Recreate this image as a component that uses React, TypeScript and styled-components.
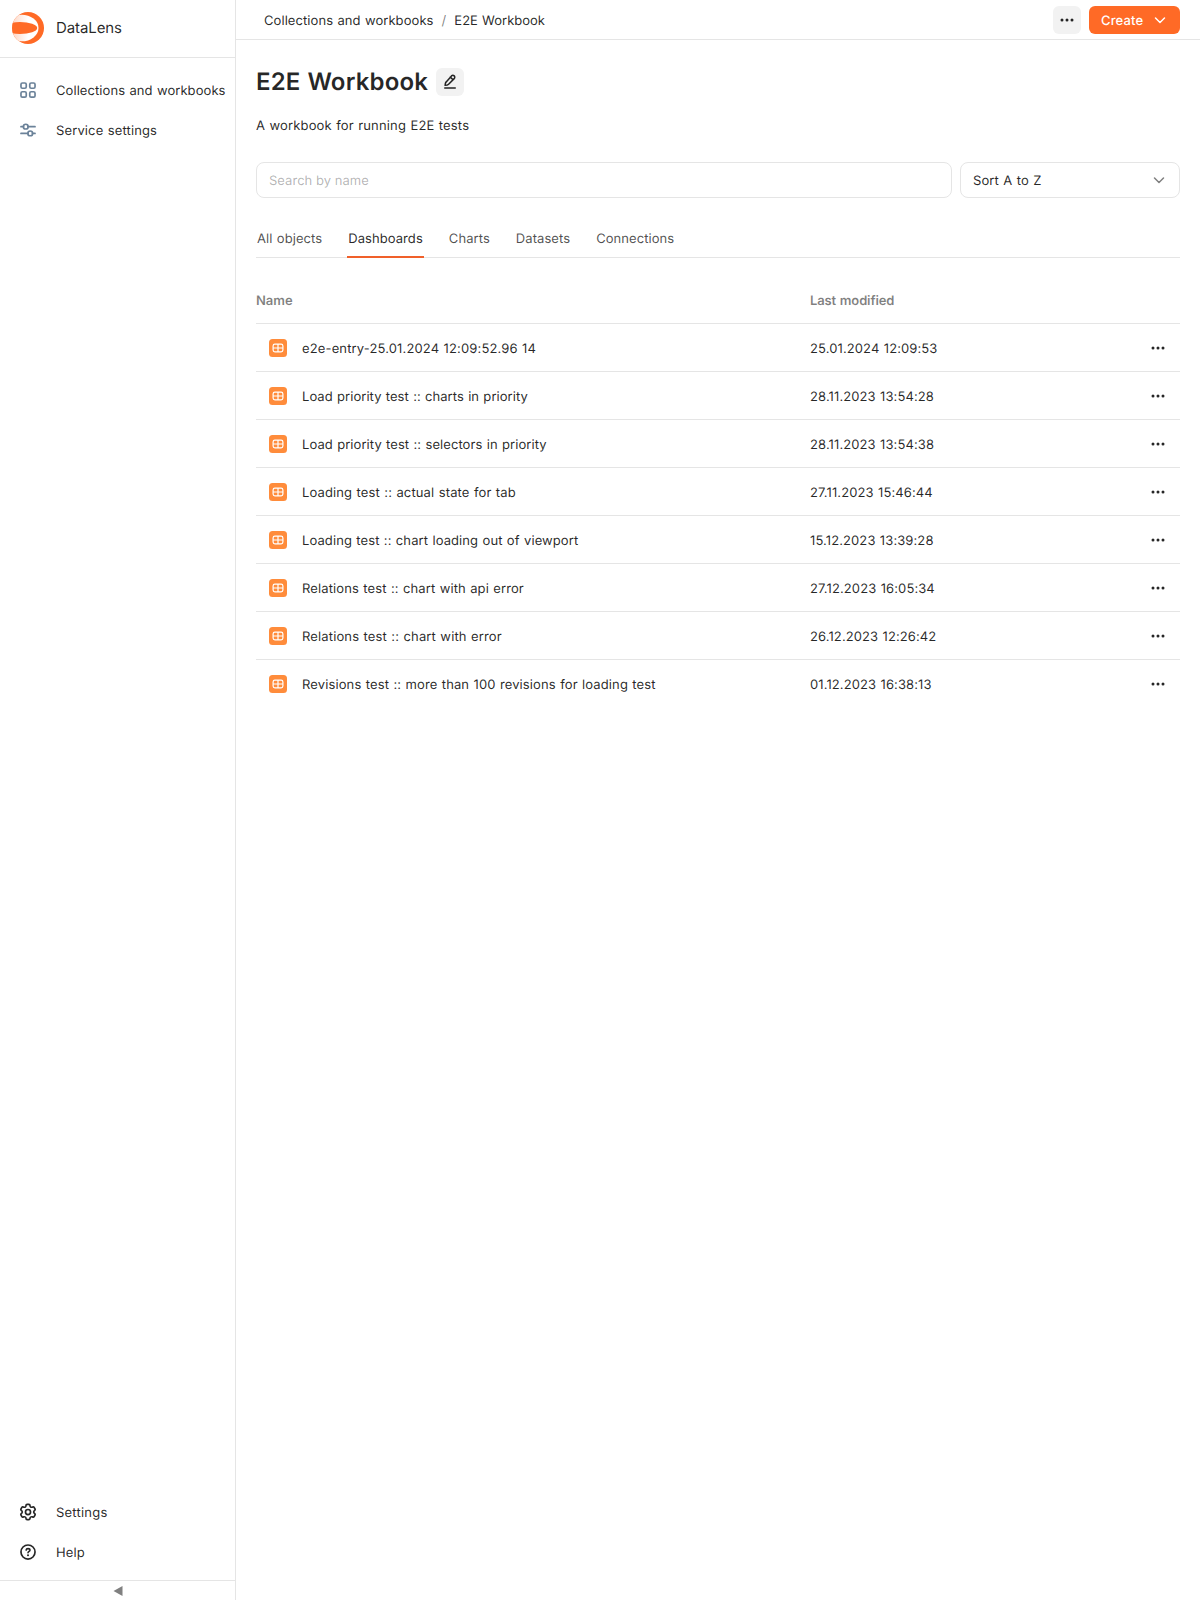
import React from 'react';
import styled, { createGlobalStyle } from 'styled-components';

const GlobalStyle = createGlobalStyle`
  * { box-sizing: border-box; }
  html, body { margin: 0; padding: 0; }
  body {
    font-family: Inter, "Liberation Sans", sans-serif;
    font-size: 13px;
    line-height: 18px;
    color: rgba(0, 0, 0, 0.85);
    background: #fff;
    text-rendering: geometricPrecision;
    word-spacing: 0.6px;
  }
  button, input { font: inherit; color: inherit; text-rendering: inherit; }
`;

const line = '#e5e5e5';
const brand = '#ff6a26';

const Label = styled.span<{ $track?: number }>`
  display: block;
  padding-top: 2px;
  white-space: nowrap;
  letter-spacing: ${(p) => p.$track ?? 0.1}px;
`;

const Page = styled.div`
  display: flex;
  height: 1600px;
`;

const Sidebar = styled.aside`
  width: 236px;
  flex: none;
  display: flex;
  flex-direction: column;
  border-right: 1px solid ${line};
`;

const Brand = styled.div`
  display: flex;
  align-items: center;
  gap: 12px;
  height: 58px;
  padding: 0 12px 2px;
  border-bottom: 1px solid ${line};
  font-size: 15px;
  line-height: 20px;
  letter-spacing: -0.1px;
`;

const Nav = styled.nav<{ $bottom?: boolean }>`
  display: flex;
  flex-direction: column;
  margin-top: ${(p) => (p.$bottom ? 'auto' : '12px')};
  margin-bottom: ${(p) => (p.$bottom ? '8px' : '0')};
`;

const NavItem = styled.a<{ $tint?: string }>`
  display: flex;
  align-items: center;
  gap: 19px;
  height: 40px;
  padding-left: 19px;
  svg { color: ${(p) => p.$tint || 'rgba(0, 0, 0, 0.85)'}; }
`;

const Collapse = styled.button`
  display: flex;
  align-items: center;
  justify-content: center;
  height: 20px;
  border: 0;
  border-top: 1px solid ${line};
  background: none;
  padding: 1px 0 0;
`;

const Main = styled.main`
  flex: 1;
  min-width: 0;
`;

const TopBar = styled.header`
  display: flex;
  align-items: center;
  gap: 8px;
  height: 40px;
  padding: 0 20px 0 28px;
  border-bottom: 1px solid ${line};
`;

const Crumbs = styled.div`
  display: flex;
  gap: 8px;
  margin-right: auto;
`;

const Slash = styled(Label)`
  color: rgba(0, 0, 0, 0.5);
`;

const IconButton = styled.button<{ $filled?: boolean }>`
  display: flex;
  align-items: center;
  justify-content: center;
  width: 28px;
  height: 28px;
  padding: 0;
  border: 0;
  border-radius: 6px;
  background: ${(p) => (p.$filled ? '#f2f2f2' : 'transparent')};
`;

const CreateButton = styled.button`
  display: flex;
  align-items: center;
  justify-content: space-between;
  width: 91px;
  height: 28px;
  padding: 0 12px;
  border: 0;
  border-radius: 6px;
  background: ${brand};
  color: #fff;
  font-weight: 500;
`;

const Content = styled.section`
  padding: 28px 20px 0;
`;

const TitleRow = styled.div`
  display: flex;
  align-items: center;
  gap: 8px;
  height: 28px;
`;

const Title = styled.h1`
  margin: 0;
  font-size: 24px;
  line-height: 28px;
  font-weight: 600;
  letter-spacing: 0.18px;
`;

const Description = styled.p`
  margin: 19px 0 27px;
`;

const Filters = styled.div`
  display: flex;
  gap: 8px;
`;

const Search = styled.input`
  flex: 1;
  height: 36px;
  padding: 2px 12px 0;
  border: 1px solid ${line};
  border-radius: 8px;
  outline: none;
  &::placeholder { color: rgba(0, 0, 0, 0.3); opacity: 1; letter-spacing: 0.03px; }
`;

const Select = styled.div`
  display: flex;
  align-items: center;
  justify-content: space-between;
  width: 220px;
  height: 36px;
  padding: 0 12px;
  border: 1px solid ${line};
  border-radius: 8px;
  svg { color: rgba(0, 0, 0, 0.5); }
`;

const Tabs = styled.div`
  display: flex;
  gap: 24px;
  height: 40px;
  margin-top: 20px;
  box-shadow: inset 0 -1px ${line};
`;

const Tab = styled.div<{ $active?: boolean }>`
  display: flex;
  align-items: center;
  padding: 2px 1px 0;
  border-bottom: 2px solid ${(p) => (p.$active ? '#f0602a' : 'transparent')};
  color: ${(p) => (p.$active ? 'rgba(0,0,0,0.85)' : 'rgba(0,0,0,0.7)')};
`;

const Row = styled.div<{ $head?: boolean }>`
  display: grid;
  grid-template-columns: 554px 1fr 28px;
  align-items: center;
  height: 48px;
  margin-top: ${(p) => (p.$head ? '18px' : '0')};
  padding-right: 8px;
  border-bottom: 1px solid ${line};
  font-weight: ${(p) => (p.$head ? 600 : 400)};
  color: ${(p) => (p.$head ? 'rgba(0,0,0,0.5)' : 'inherit')};
  &:last-child { border-bottom: 0; }
`;

const NameCell = styled.div`
  display: flex;
  align-items: center;
  gap: 15px;
  padding-left: 13px;
`;

const EntryBadge = styled.span`
  display: flex;
  align-items: center;
  justify-content: center;
  width: 18px;
  height: 18px;
  border-radius: 3.5px;
  background: #ff8c3b;
`;

const Logo = () => (
  <svg width="32" height="32" viewBox="0 0 32 32">
    <defs>
      <linearGradient id="lens" x1="0" x2="32" y1="0" y2="0" gradientUnits="userSpaceOnUse">
        <stop offset="0" stopColor="#ffd6c4" />
        <stop offset="0.5" stopColor="#fff" />
      </linearGradient>
      <clipPath id="disc"><circle cx="16" cy="16" r="16" /></clipPath>
    </defs>
    <g clipPath="url(#disc)">
      <rect width="32" height="32" fill={brand} />
      <ellipse cx="9.5" cy="16" rx="17" ry="13.3" fill="url(#lens)" />
      <ellipse cx="8" cy="16" rx="17.2" ry="5.9" fill={brand} />
    </g>
  </svg>
);

const CellsIcon = () => (
  <svg width="18" height="18" viewBox="0 0 16 16" fill="none" stroke="currentColor" strokeWidth="1.5">
    <rect x="1.75" y="1.75" width="4.7" height="4.7" rx="1.25" />
    <rect x="9.55" y="1.75" width="4.7" height="4.7" rx="1.25" />
    <rect x="1.75" y="9.55" width="4.7" height="4.7" rx="1.25" />
    <rect x="9.55" y="9.55" width="4.7" height="4.7" rx="1.25" />
  </svg>
);

const SlidersIcon = () => (
  <svg width="18" height="18" viewBox="0 0 16 16" fill="none" stroke="currentColor" strokeWidth="1.5" strokeLinecap="round">
    <path d="M1.75 5H4M8 5h6.25M1.75 11H8M12 11h2.25" />
    <circle cx="6" cy="5" r="2.1" />
    <circle cx="10" cy="11" r="2.1" />
  </svg>
);

const GearIcon = () => (
  <svg width="18" height="18" viewBox="0 0 16 16" fill="currentColor">
    <path
      fillRule="evenodd"
      clipRule="evenodd"
      d="M7.199 2H8.8a.2.2 0 0 1 .2.2c0 1.808 1.958 2.939 3.524 2.034a.199.199 0 0 1 .271.073l.802 1.388a.199.199 0 0 1-.073.272c-1.566.904-1.566 3.164 0 4.069a.199.199 0 0 1 .073.271l-.802 1.388a.199.199 0 0 1-.271.073C10.958 10.863 9 11.993 9 13.8a.2.2 0 0 1-.199.2H7.2a.199.199 0 0 1-.2-.2c0-1.808-1.958-2.938-3.524-2.034a.199.199 0 0 1-.272-.073l-.8-1.388a.199.199 0 0 1 .072-.271c1.566-.905 1.566-3.165 0-4.07a.199.199 0 0 1-.073-.271l.801-1.388a.199.199 0 0 1 .272-.073C5.042 5.138 7 4.007 7 2.2c0-.11.089-.199.199-.199M5.5 2.2c0-.94.76-1.7 1.699-1.7H8.8c.94 0 1.7.76 1.7 1.7a.85.85 0 0 0 1.274.735 1.699 1.699 0 0 1 2.32.622l.802 1.388c.469.813.19 1.851-.622 2.32a.85.85 0 0 0 0 1.472 1.7 1.7 0 0 1 .622 2.32l-.802 1.388a1.699 1.699 0 0 1-2.32.622.85.85 0 0 0-1.274.735c0 .939-.76 1.7-1.699 1.7H7.2a1.7 1.7 0 0 1-1.699-1.7.85.85 0 0 0-1.274-.735 1.698 1.698 0 0 1-2.32-.622l-.802-1.388a1.699 1.699 0 0 1 .622-2.32.85.85 0 0 0 0-1.471 1.699 1.699 0 0 1-.622-2.321l.801-1.388a1.699 1.699 0 0 1 2.32-.622A.85.85 0 0 0 5.5 2.2m4 5.8a1.5 1.5 0 1 1-3 0 1.5 1.5 0 0 1 3 0M11 8a3 3 0 1 1-6 0 3 3 0 0 1 6 0"
    />
  </svg>
);

const HelpIcon = () => (
  <svg width="18" height="18" viewBox="0 0 16 16" fill="none" stroke="currentColor" strokeWidth="1.5" strokeLinecap="round">
    <circle cx="8" cy="8" r="6.25" />
    <path d="M6.3 6.3C6.4 5.4 7.1 5 8 5s1.75.5 1.75 1.4C9.75 7.5 8.1 7.5 8 8.7" strokeWidth="1.4" />
    <circle cx="8" cy="10.9" r="0.9" fill="currentColor" stroke="none" />
  </svg>
);

const DotsIcon = () => (
  <svg width="16" height="16" viewBox="0 0 16 16" fill="currentColor">
    <circle cx="3" cy="8" r="1.5" />
    <circle cx="8" cy="8" r="1.5" />
    <circle cx="13" cy="8" r="1.5" />
  </svg>
);

const ChevronIcon = () => (
  <svg width="16" height="16" viewBox="0 0 16 16" fill="none" stroke="currentColor" strokeWidth="1.5" strokeLinecap="round" strokeLinejoin="round">
    <path d="M3.5 6L8 10.5L12.5 6" />
  </svg>
);

const PencilIcon = () => (
  <svg width="16" height="16" viewBox="0 0 16 16" fill="none" stroke="currentColor" strokeWidth="1.5" strokeLinecap="round" strokeLinejoin="round">
    <path d="M2.75 13.9h10.5" />
    <path d="M9.5 1.9a1.9 1.9 0 0 1 2.7 2.7L6.6 10.2a3 3 0 0 1-1.3.75L3.1 11.3l.35-2.1a3 3 0 0 1 .75-1.3ZM8.3 3.1l2.7 2.7" />
  </svg>
);

const DashboardIcon = () => (
  <svg width="12" height="10" viewBox="0 0 12 10" fill="none" stroke="#fff" strokeWidth="1.2">
    <rect x="1.1" y="1.1" width="9.8" height="7.8" rx="1.8" />
    <path d="M6 1v8M1 5h10" />
  </svg>
);

const tabs = ['All objects', 'Dashboards', 'Charts', 'Datasets', 'Connections'];

const entries: { name: string; date: string; track: number }[] = [
  { name: 'e2e-entry-25.01.2024 12:09:52.96 14', date: '25.01.2024 12:09:53', track: 0.14 },
  { name: 'Load priority test :: charts in priority', date: '28.11.2023 13:54:28', track: 0.05 },
  { name: 'Load priority test :: selectors in priority', date: '28.11.2023 13:54:38', track: 0.07 },
  { name: 'Loading test :: actual state for tab', date: '27.11.2023 15:46:44', track: 0.127 },
  { name: 'Loading test :: chart loading out of viewport', date: '15.12.2023 13:39:28', track: 0.09 },
  { name: 'Relations test :: chart with api error', date: '27.12.2023 16:05:34', track: 0.108 },
  { name: 'Relations test :: chart with error', date: '26.12.2023 12:26:42', track: 0.138 },
  { name: 'Revisions test :: more than 100 revisions for loading test', date: '01.12.2023 16:38:13', track: 0.117 },
];

export default function App() {
  return (
    <Page>
      <GlobalStyle />
      <Sidebar>
        <Brand><Logo />DataLens</Brand>
        <Nav>
          <NavItem $tint="#6b8299"><CellsIcon /><Label $track={0.07}>Collections and workbooks</Label></NavItem>
          <NavItem $tint="#6b8299"><SlidersIcon /><Label $track={0.13}>Service settings</Label></NavItem>
        </Nav>
        <Nav $bottom>
          <NavItem><GearIcon /><Label $track={0.22}>Settings</Label></NavItem>
          <NavItem><HelpIcon /><Label>Help</Label></NavItem>
        </Nav>
        <Collapse aria-label="Collapse">
          <svg width="10" height="10" viewBox="0 0 10 10"><path d="M9.5 0v10L.5 5Z" fill="#808080" /></svg>
        </Collapse>
      </Sidebar>
      <Main>
        <TopBar>
          <Crumbs>
            <Label $track={0.07}>Collections and workbooks</Label>
            <Slash>/</Slash>
            <Label $track={0}>E2E Workbook</Label>
          </Crumbs>
          <IconButton $filled><DotsIcon /></IconButton>
          <CreateButton><Label $track={0.15}>Create</Label><ChevronIcon /></CreateButton>
        </TopBar>
        <Content>
          <TitleRow>
            <Title>E2E Workbook</Title>
            <IconButton $filled><PencilIcon /></IconButton>
          </TitleRow>
          <Description><Label $track={0.15}>A workbook for running E2E tests</Label></Description>
          <Filters>
            <Search placeholder="Search by name" />
            <Select><Label>Sort A to Z</Label><ChevronIcon /></Select>
          </Filters>
          <Tabs>
            {tabs.map((t) => (
              <Tab key={t} $active={t === 'Dashboards'}><Label $track={0.07}>{t}</Label></Tab>
            ))}
          </Tabs>
          <div>
            <Row $head><Label $track={0}>Name</Label><Label $track={-0.13}>Last modified</Label></Row>
            {entries.map(({ name, date, track }) => (
              <Row key={name}>
                <NameCell>
                  <EntryBadge><DashboardIcon /></EntryBadge>
                  <Label $track={track}>{name}</Label>
                </NameCell>
                <Label>{date}</Label>
                <IconButton><DotsIcon /></IconButton>
              </Row>
            ))}
          </div>
        </Content>
      </Main>
    </Page>
  );
}
